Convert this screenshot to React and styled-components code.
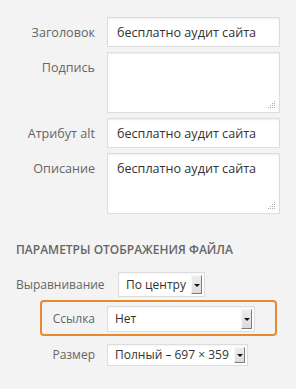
import React from "react";
import styled, { createGlobalStyle } from "styled-components";

const Global = createGlobalStyle`
  html, body { margin: 0; padding: 0; background: #f3f3f3; }
  body { font-family: "Open Sans", "Liberation Sans", sans-serif; font-size: 13px; color: #333; }
`;

const Page = styled.div`
  width: 296px;
  height: 389px;
  padding-top: 17px;
  box-sizing: border-box;
  overflow: hidden;
`;

const Fields = styled.div`
  display: flex;
  flex-direction: column;
  gap: 5px;
`;

const Row = styled.div`
  display: flex;
  align-items: flex-start;
  gap: 12px;
`;

const Label = styled.label`
  width: ${(p) => p.$w || 95}px;
  flex: none;
  text-align: right;
  color: #666;
  font-size: ${(p) => p.$fs || 12.6}px;
  line-height: 18px;
  padding-top: ${(p) => (p.$pt != null ? p.$pt : 7)}px;
  box-sizing: border-box;
  white-space: nowrap;
`;

const Input = styled.div`
  width: 173px;
  height: ${(p) => p.$h || 30}px;
  box-sizing: border-box;
  background: #fff;
  border: 1px solid #ddd;
  box-shadow: inset 0 1px 2px rgba(0, 0, 0, 0.07);
  padding: 6px 8px 0 9px;
  font-size: 12.6px;
  line-height: 18px;
  color: #333;
  position: relative;
  white-space: nowrap;
`;

const Grip = styled.svg`
  position: absolute;
  right: 4px;
  bottom: 4px;
`;

const ResizeGrip = () => (
  <Grip width="7" height="7" viewBox="0 0 7 7">
    {[
      [6, 0], [4, 2], [6, 2], [2, 4], [4, 4], [6, 4], [0, 6], [2, 6], [4, 6], [6, 6],
    ].map(([x, y], i) => (
      <rect key={i} x={x} y={y} width="1" height="1" fill="#aaa" />
    ))}
  </Grip>
);

const Header = styled.h3`
  margin: 28px 0 0 16px;
  font-size: 12px;
  font-weight: 600;
  line-height: 16px;
  color: #666;
  text-transform: uppercase;
  white-space: nowrap;
`;

const AlignRow = styled.div`
  display: flex;
  align-items: center;
  gap: 13px;
  margin: 14px 0 0 16px;
`;

const PlainLabel = styled.span`
  width: 89px;
  color: #666;
  font-size: 12px;
  line-height: 18px;
  white-space: nowrap;
`;

const Highlight = styled.div`
  margin: 3px 0 0 40px;
  width: 237px;
  height: 36px;
  box-sizing: border-box;
  border: 2px solid #e58a2f;
  border-radius: 4px;
  padding-top: 4px;
  display: flex;
  align-items: flex-start;
  gap: 12px;
`;

const SelectBox = styled.div`
  width: ${(p) => p.$w}px;
  height: ${(p) => p.$h}px;
  flex: none;
  box-sizing: border-box;
  background: #fff;
  border: 1px solid #ddd;
  box-shadow: inset 0 1px 2px rgba(0, 0, 0, 0.05);
  display: flex;
  align-items: center;
  justify-content: space-between;
  padding: 0 2px 0 7px;
  color: #333;
  font-size: 12px;
  white-space: nowrap;
`;

const SelectText = styled.span`
  line-height: 18px;
`;

const ArrowBtn = styled.span`
  width: 11px;
  align-self: stretch;
  margin: 2px 0;
  box-sizing: border-box;
  background: linear-gradient(#ececec, #dcdcdc);
  border-top: 1px solid #f6f6f6;
  border-left: 1px solid #f6f6f6;
  border-right: 1px solid #7d7d7d;
  border-bottom: 1px solid #7d7d7d;
  display: flex;
  align-items: center;
  justify-content: center;
  &::after {
    content: "";
    border-left: 3px solid transparent;
    border-right: 3px solid transparent;
    border-top: 3px solid #111;
    margin-top: 1px;
  }
`;

const Select = ({ w, h, children }) => (
  <SelectBox $w={w} $h={h}>
    <SelectText>{children}</SelectText>
    <ArrowBtn />
  </SelectBox>
);

const SizeRow = styled.div`
  display: flex;
  align-items: center;
  gap: 12px;
  margin-top: 8px;
`;

const RightLabel = styled.span`
  width: 95px;
  text-align: right;
  color: #666;
  font-size: 12px;
  line-height: 18px;
  flex: none;
`;

export default function App() {
  return (
    <Page>
      <Global />
      <Fields>
        <Row>
          <Label>Заголовок</Label>
          <Input>бесплатно аудит сайта</Input>
        </Row>
        <Row>
          <Label>Подпись</Label>
          <Input $h={61}>
            <ResizeGrip />
          </Input>
        </Row>
        <Row>
          <Label>Атрибут alt</Label>
          <Input>бесплатно аудит сайта</Input>
        </Row>
        <Row>
          <Label>Описание</Label>
          <Input $h={61}>
            бесплатно аудит сайта
            <ResizeGrip />
          </Input>
        </Row>
      </Fields>
      <Header>Параметры отображения файла</Header>
      <AlignRow>
        <PlainLabel>Выравнивание</PlainLabel>
        <Select w={87} h={25}>По центру</Select>
      </AlignRow>
      <Highlight>
        <Label $w={53} $pt={4} $fs={12}>Ссылка</Label>
        <Select w={148} h={26}>Нет</Select>
      </Highlight>
      <SizeRow>
        <RightLabel>Размер</RightLabel>
        <Select w={141} h={22}>Полный – 697 × 359</Select>
      </SizeRow>
    </Page>
  );
}
